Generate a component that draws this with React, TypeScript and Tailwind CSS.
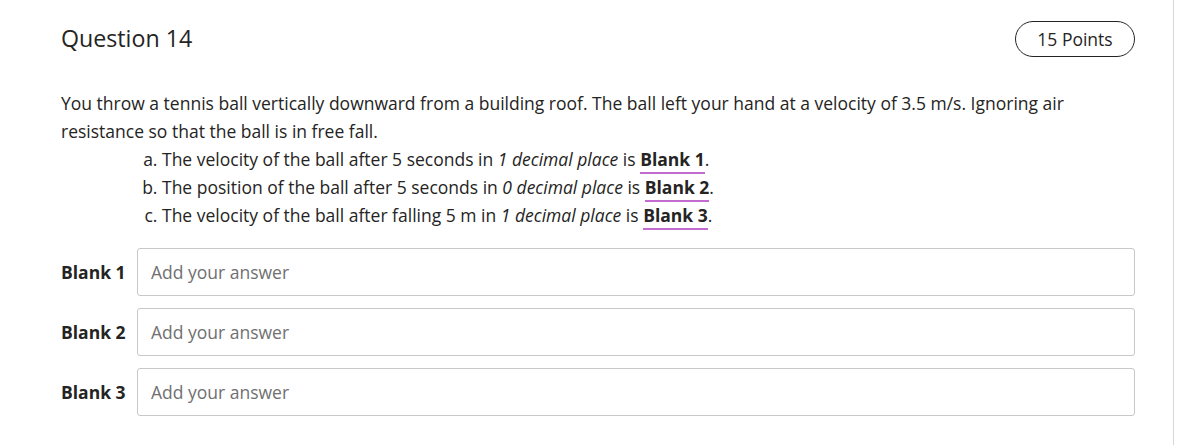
import React from "react";

const FONT = { fontFamily: '"Open Sans", "Noto Sans", sans-serif' };

function BlankRef({ n }: { n: number }) {
  return (
    <span className="font-bold border-b-2 border-[#c36bd0] pb-px">
      Blank {n}
    </span>
  );
}

const items = [
  { pre: "The velocity of the ball after 5 seconds in ", em: "1 decimal place", n: 1 },
  { pre: "The position of the ball after 5 seconds in ", em: "0 decimal place", n: 2 },
  { pre: "The velocity of the ball after falling 5 m in ", em: "1 decimal place", n: 3 },
];

export default function App() {
  return (
    <div className="min-h-[445px] w-full bg-white text-[#252423]" style={FONT}>
      <div className="w-[1174px] min-h-[445px] border-r border-[#d6d6d6] pl-[61px] pr-[38px] pt-[21px]">
        {/* Header */}
        <div className="flex h-[36px] items-center justify-between">
          <h1 className="text-[23.2px] leading-none">Question 14</h1>
          <div className="flex h-[36px] w-[120px] items-center justify-center rounded-full border border-[#252423] text-[17.5px]">
            15 Points
          </div>
        </div>

        {/* Prompt */}
        <div className="mt-[32px] text-[17.5px] leading-[28px]">
          <p>
            You throw a tennis ball vertically downward from a building roof. The ball left your hand at a velocity of
            3.5 m/s. Ignoring air resistance so that the ball is in free fall.
          </p>
          <ol className="list-[lower-alpha] pl-[101px]">
            {items.map((it) => (
              <li key={it.n}>
                {it.pre}
                <em>{it.em}</em> is <BlankRef n={it.n} />.
              </li>
            ))}
          </ol>
        </div>

        {/* Answers */}
        <div className="mt-[19px] flex flex-col gap-[12px]">
          {[1, 2, 3].map((n) => (
            <div key={n} className="flex items-center">
              <label className="w-[76px] shrink-0 text-[17.5px] font-bold">Blank {n}</label>
              <input
                type="text"
                placeholder="Add your answer"
                className="h-[48px] flex-1 rounded-[3px] border border-[#c8c8c8] px-[13px] text-[17.5px] text-[#252423] placeholder:text-[#707070] outline-none"
                style={FONT}
              />
            </div>
          ))}
        </div>
      </div>
    </div>
  );
}
